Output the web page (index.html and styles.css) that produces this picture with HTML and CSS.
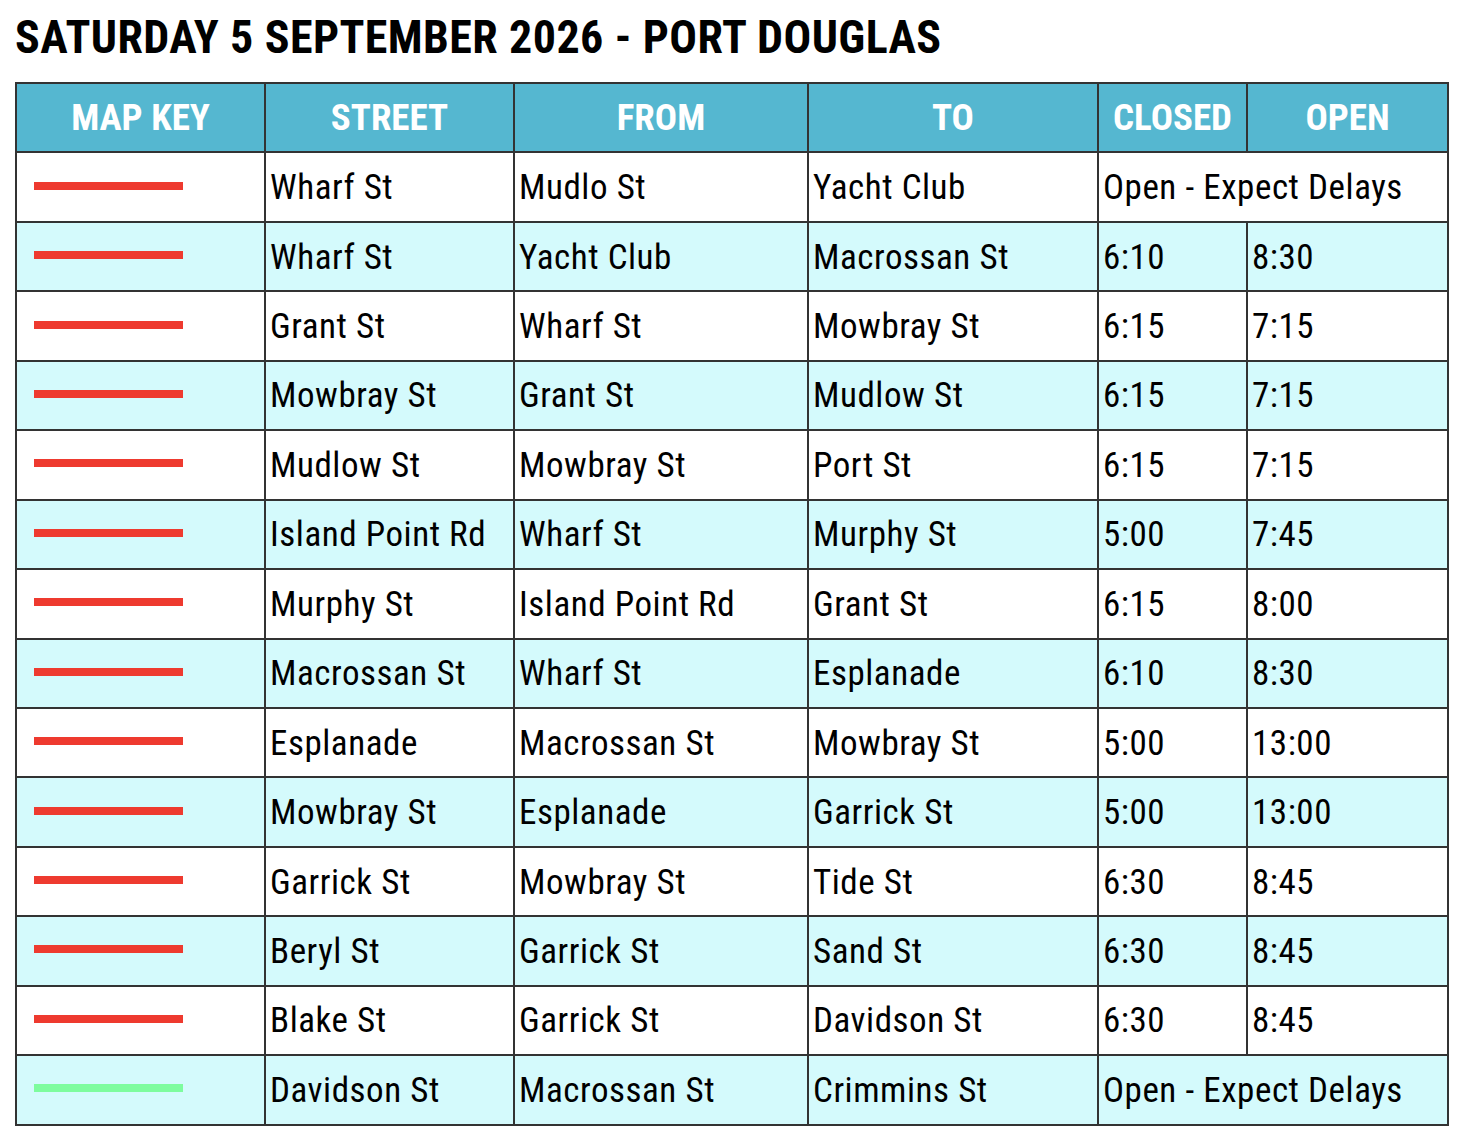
FILE: index.html
```html
<!DOCTYPE html>
<html>
<head>
<meta charset="utf-8">
<link rel="stylesheet" href="styles.css">
</head>
<body>
<h1 class="title">SATURDAY 5 SEPTEMBER 2026 - PORT DOUGLAS</h1>
<table class="closures">
  <colgroup>
    <col class="c-key"><col class="c-street"><col class="c-from"><col class="c-to"><col class="c-closed"><col class="c-open">
  </colgroup>
  <thead>
    <tr><th>MAP KEY</th><th>STREET</th><th>FROM</th><th>TO</th><th>CLOSED</th><th>OPEN</th></tr>
  </thead>
  <tbody>
    <tr><td><div class="key red"></div></td><td>Wharf St</td><td>Mudlo St</td><td>Yacht Club</td><td colspan="2">Open - Expect Delays</td></tr>
    <tr><td><div class="key red"></div></td><td>Wharf St</td><td>Yacht Club</td><td>Macrossan St</td><td>6:10</td><td>8:30</td></tr>
    <tr><td><div class="key red"></div></td><td>Grant St</td><td>Wharf St</td><td>Mowbray St</td><td>6:15</td><td>7:15</td></tr>
    <tr><td><div class="key red"></div></td><td>Mowbray St</td><td>Grant St</td><td>Mudlow St</td><td>6:15</td><td>7:15</td></tr>
    <tr><td><div class="key red"></div></td><td>Mudlow St</td><td>Mowbray St</td><td>Port St</td><td>6:15</td><td>7:15</td></tr>
    <tr><td><div class="key red"></div></td><td>Island Point Rd</td><td>Wharf St</td><td>Murphy St</td><td>5:00</td><td>7:45</td></tr>
    <tr><td><div class="key red"></div></td><td>Murphy St</td><td>Island Point Rd</td><td>Grant St</td><td>6:15</td><td>8:00</td></tr>
    <tr><td><div class="key red"></div></td><td>Macrossan St</td><td>Wharf St</td><td>Esplanade</td><td>6:10</td><td>8:30</td></tr>
    <tr><td><div class="key red"></div></td><td>Esplanade</td><td>Macrossan St</td><td>Mowbray St</td><td>5:00</td><td>13:00</td></tr>
    <tr><td><div class="key red"></div></td><td>Mowbray St</td><td>Esplanade</td><td>Garrick St</td><td>5:00</td><td>13:00</td></tr>
    <tr><td><div class="key red"></div></td><td>Garrick St</td><td>Mowbray St</td><td>Tide St</td><td>6:30</td><td>8:45</td></tr>
    <tr><td><div class="key red"></div></td><td>Beryl St</td><td>Garrick St</td><td>Sand St</td><td>6:30</td><td>8:45</td></tr>
    <tr><td><div class="key red"></div></td><td>Blake St</td><td>Garrick St</td><td>Davidson St</td><td>6:30</td><td>8:45</td></tr>
    <tr><td><div class="key green"></div></td><td>Davidson St</td><td>Macrossan St</td><td>Crimmins St</td><td colspan="2">Open - Expect Delays</td></tr>
  </tbody>
</table>
</body>
</html>
```
FILE: styles.css
```css
html, body {
  margin: 0;
  padding: 0;
  background: #ffffff;
}
body {
  padding: 10px 0 0 15px;
  font-family: "Roboto Condensed", Roboto, "Liberation Sans", sans-serif;
  font-stretch: condensed;
  color: #000;
}
.title {
  margin: 0 0 18px 0;
  font-size: 46px;
  line-height: 54px;
  font-weight: 700;
  letter-spacing: 0.4px;
}
.closures {
  border-collapse: collapse;
  table-layout: fixed;
  width: 1432px;
  border: 2px solid #333;
}
.c-key { width: 249px; }
.c-street { width: 249px; }
.c-from { width: 294px; }
.c-to { width: 290px; }
.c-closed { width: 149px; }
.c-open { width: 201px; }
.closures th,
.closures td {
  border: 2px solid #333;
  padding: 0 0 0 4px;
  height: 69.45px;
  box-sizing: border-box;
  vertical-align: middle;
  white-space: nowrap;
}
.closures th {
  background: #55b7d0;
  color: #fff;
  font-size: 37px;
  font-weight: 700;
  text-align: center;
  padding: 0;
}
.closures td {
  font-size: 35px;
  font-weight: 400;
  letter-spacing: 0.55px;
  text-align: left;
  padding-top: 1px;
}
.closures tbody tr:nth-child(even) td {
  background: #d4fafc;
}
.key {
  width: 149px;
  height: 8px;
  margin: 0 0 4px 13px;
}
.key.red { background: #ee3a2f; }
.key.green { background: #7dfc9e; }
```
